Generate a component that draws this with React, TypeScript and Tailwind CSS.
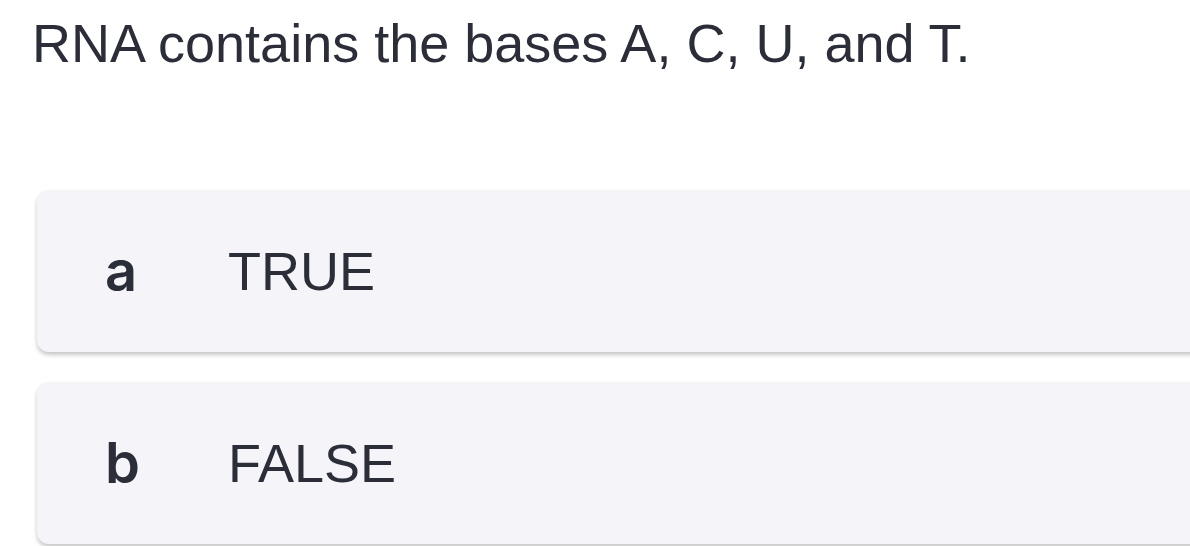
const options = [
  { key: "a", text: "TRUE" },
  { key: "b", text: "FALSE" },
];

export default function App() {
  return (
    <div className="h-[546px] w-[1190px] overflow-hidden bg-white text-[#2b2d38]">
      <h1 className="pl-[32px] pt-[12px] font-['Liberation_Sans',Arial,sans-serif] text-[54px] leading-[62px]">
        RNA contains the bases A, C, U, and T.
      </h1>

      <div className="mt-[116px] flex flex-col gap-[30px] pl-[37px]">
        {options.map((opt) => (
          <div
            key={opt.key}
            className="flex h-[162px] w-[1200px] items-center rounded-[12px] bg-[#f4f4f9] pl-[68px] shadow-[0_3px_4px_rgba(0,0,0,0.22)]"
          >
            <span className="w-[123px] font-['Inter',sans-serif] text-[56px] font-semibold leading-none">
              {opt.key}
            </span>
            <span className="font-['Liberation_Sans',Arial,sans-serif] text-[54px] leading-none">
              {opt.text}
            </span>
          </div>
        ))}
      </div>
    </div>
  );
}
